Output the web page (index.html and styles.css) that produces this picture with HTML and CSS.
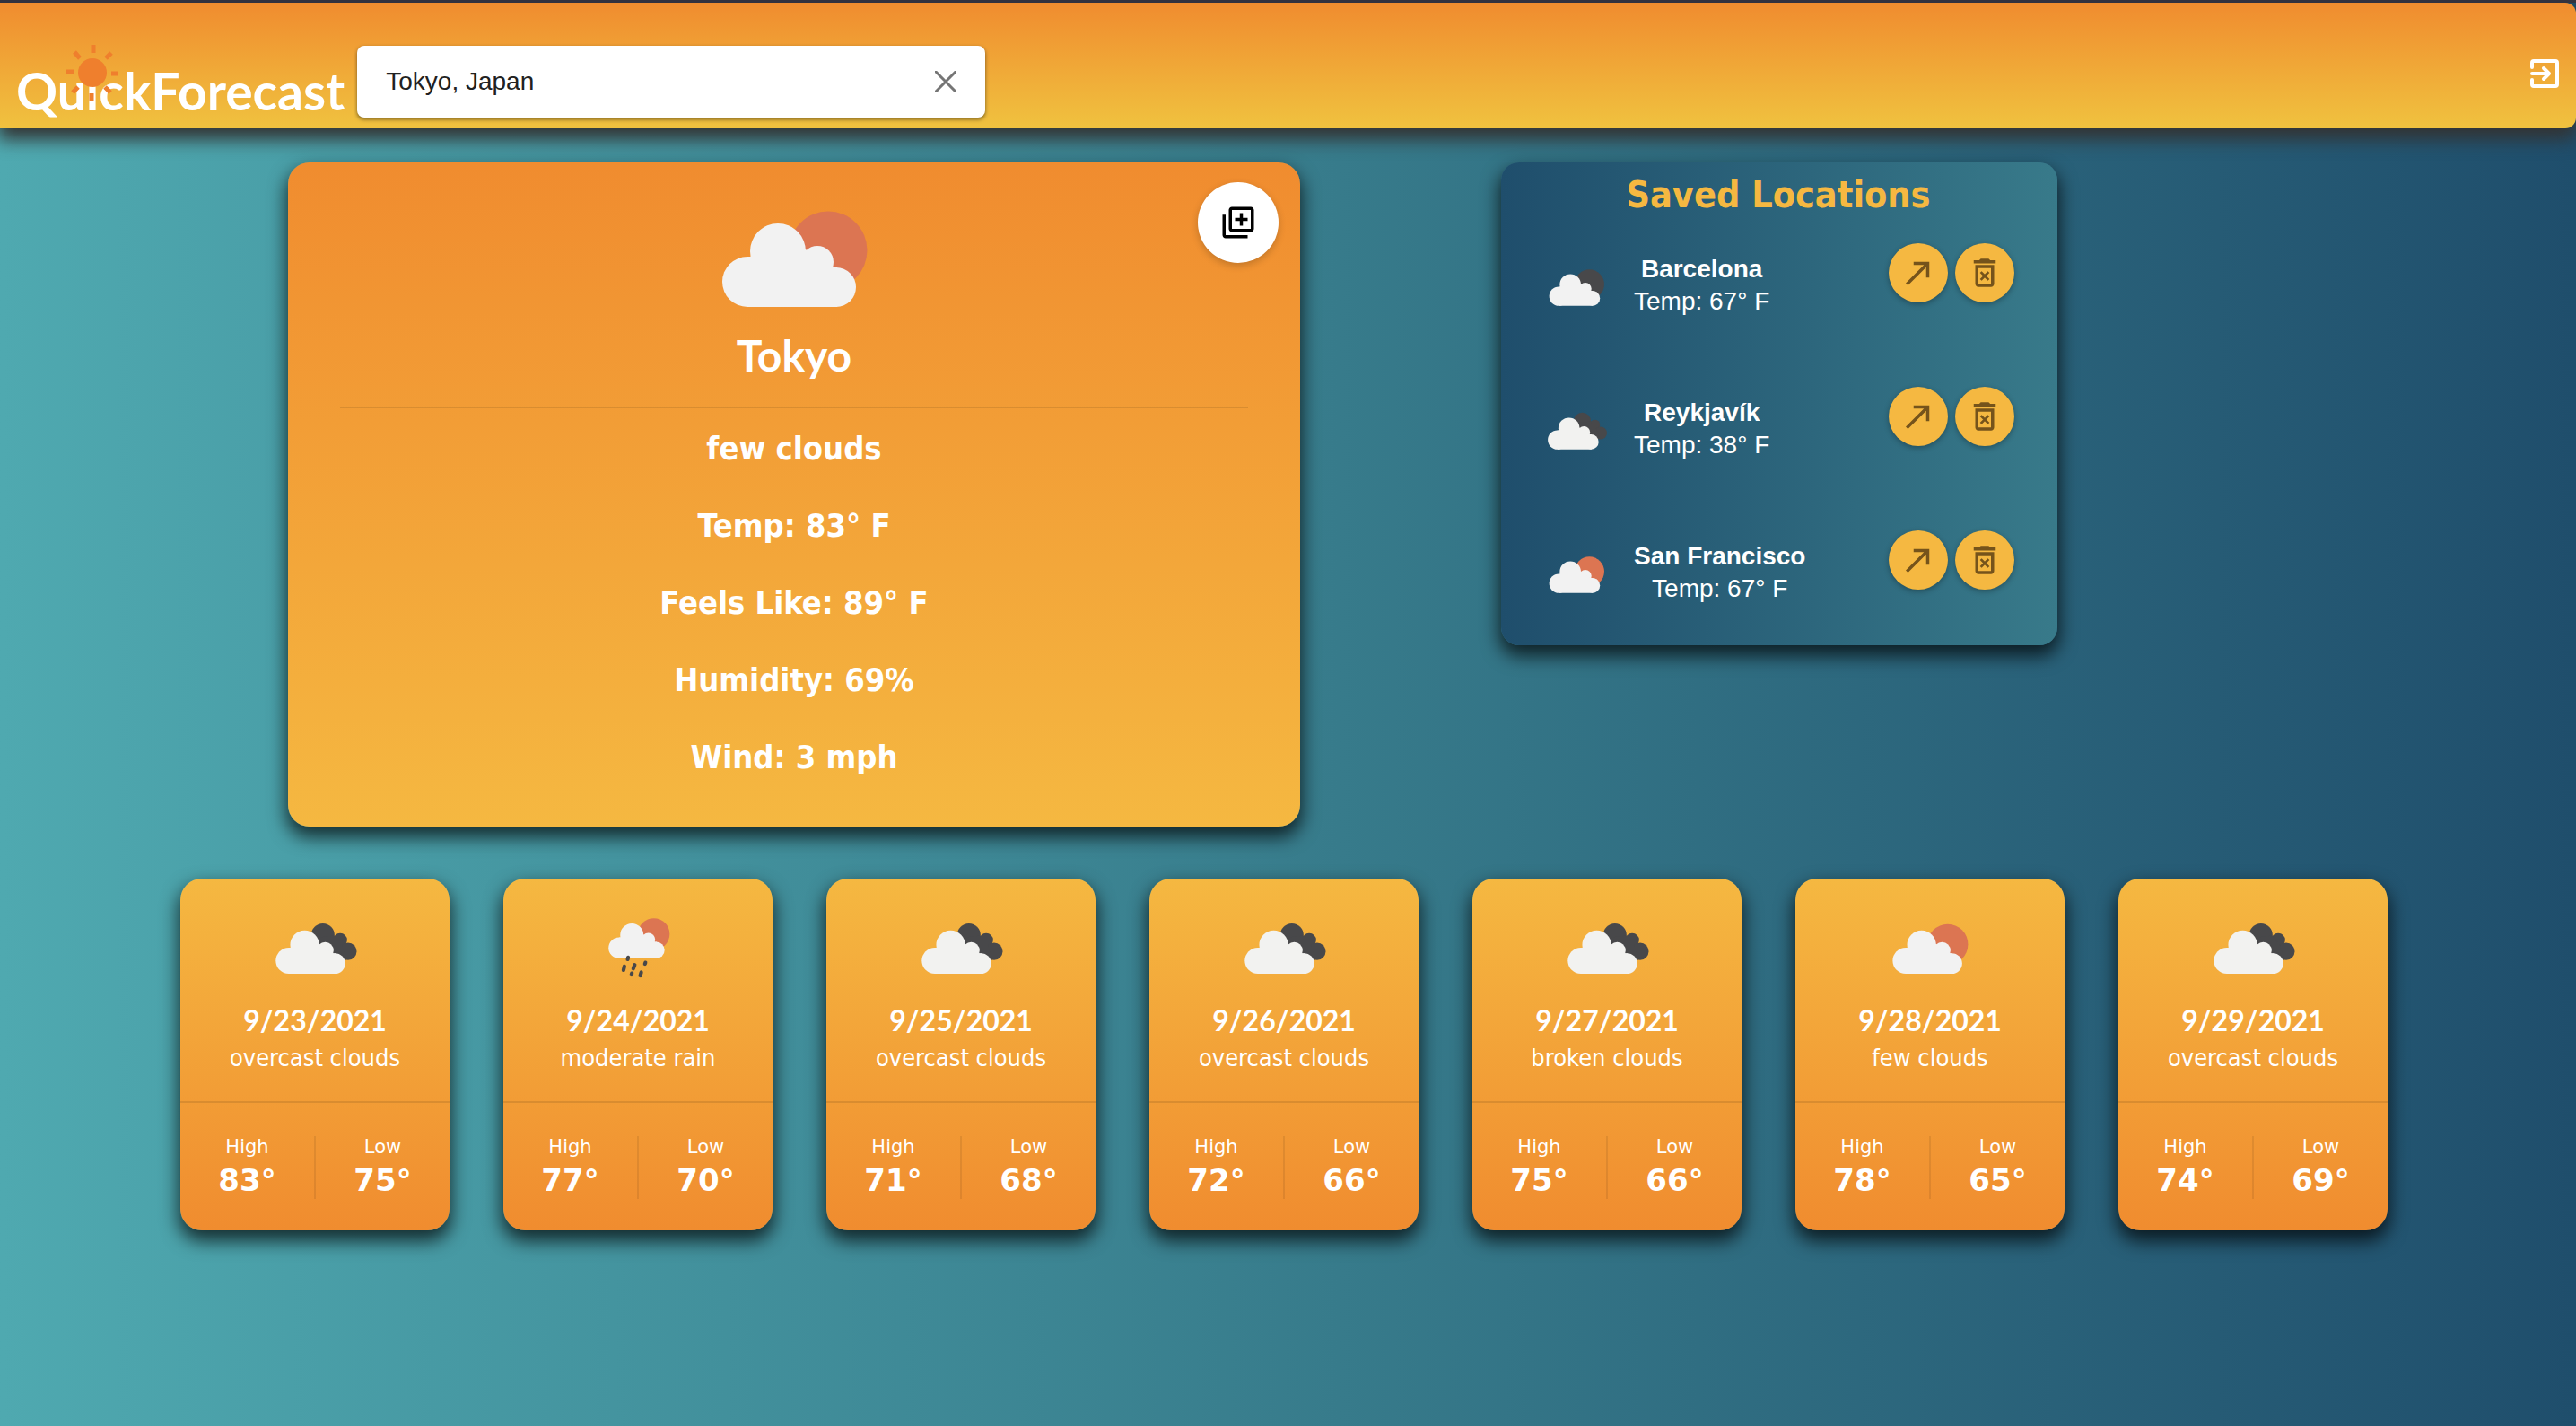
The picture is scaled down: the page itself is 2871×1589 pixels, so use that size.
FILE: index.html
```html
<!DOCTYPE html>
<html lang="en">
<head>
<meta charset="utf-8">
<title>QuickForecast</title>
<meta name="viewport" content="width=device-width, initial-scale=1">
<link rel="stylesheet" href="styles.css">
</head>
<body>
<svg class="sprite" aria-hidden="true">
  <defs>
    <g id="cloud"><circle cx="28" cy="64" r="28"/><circle cx="62" cy="30" r="31"/><circle cx="106" cy="42" r="18"/><circle cx="127" cy="70" r="22"/><path d="M28 92V36H31L62 30L93 28L106 40L124 48H128V92Z"/></g>
    <symbol id="few" viewBox="0 0 200 200"><circle cx="138" cy="89" r="43.500" fill="#dc7552"/><use href="#cloud" x="20" y="60" fill="#f2f2f2"/></symbol>
    <symbol id="few-night" viewBox="0 0 200 200"><circle cx="138" cy="89" r="43.500" fill="#48484a"/><use href="#cloud" x="20" y="60" fill="#f2f2f2"/></symbol>
    <symbol id="broken" viewBox="-3 0 200 200"><g fill="#48484a"><circle cx="114" cy="69" r="25"/><circle cx="151" cy="80" r="15"/><circle cx="168" cy="104" r="18.500"/><path d="M100 75L138 70L155 92L165 122H140Z"/></g><use href="#cloud" x="13" y="60" fill="#f2f2f0"/></symbol>
    <symbol id="rain" viewBox="0 0 200 200"><circle cx="134" cy="67" r="34" fill="#dc7552"/><use href="#cloud" transform="translate(37 45) scale(.806)" fill="#f2f2f2"/><g stroke="#48484a" stroke-width="8" stroke-linecap="round"><path d="M79 117L78 121M71 136L69 144M93 133L90 141M116 128L115 131M87 151L86 154M107 149L105 156"/></g></symbol>
    <symbol id="open" viewBox="0 0 24 24"><path d="M9 5v2h6.590L4 18.590 5.410 20 17 8.410V15h2V5z"/></symbol>
    <symbol id="trash" viewBox="0 0 24 24"><path fill-rule="evenodd" d="M6 19c0 1.100.9 2 2 2h8c1.100 0 2-.9 2-2V7H6v12zM8 9h8v10H8V9zm7.500-5l-1-1h-5l-1 1H5v2h14V4z"/><path d="M9.500 11.500l5 5m0-5l-5 5" fill="none" stroke="currentColor" stroke-width="1.600"/></symbol>
  </defs>
</svg>

<header class="header">
  <a class="logo" href="#">
    QuickForecast
    <svg class="logo-sun" viewBox="0 0 58 62" aria-hidden="true"><circle cx="29" cy="31" r="16"/><g stroke="#ef7f2d" stroke-width="5"><path d="M30 0V9M0 30H8M50 32H58M28 54V62M9 8L15 15M50 9L44 15M7 53L13 47M43 47L49 53"/></g></svg>
  </a>
  <form class="search">
    <input class="search-input" type="text" aria-label="Search location" value="Tokyo, Japan">
    <button class="search-clear" type="button" aria-label="Clear">
      <svg viewBox="0 0 24 24" aria-hidden="true"><path d="M1 1L23 23M23 1L1 23" fill="none" stroke="#757575" stroke-width="3" stroke-linecap="round"/></svg>
    </button>
  </form>
  <button class="logout" type="button" aria-label="Log out">
    <svg viewBox="0 0 32 32" fill="none" stroke="#fff" stroke-width="4" stroke-linejoin="round" stroke-linecap="round" aria-hidden="true"><path d="M2 9V4Q2 2 4 2H28Q30 2 30 4V28Q30 30 28 30H4Q2 30 2 28V23"/><path d="M2 16H21M15 10L21 16L15 22"/></svg>
  </button>
</header>

<main>
  <div class="top">
    <section class="current">
      <button class="save" type="button" aria-label="Save location">
        <svg viewBox="0 0 24 24" aria-hidden="true"><path d="M4 7H2v13c0 1.100.9 2 2 2h14v-2H4V7z"/><path fill-rule="evenodd" d="M20 2H8c-1.100 0-2 .9-2 2v12c0 1.100.9 2 2 2h12c1.100 0 2-.9 2-2V4c0-1.100-.9-2-2-2zm0 14H8V4h12v12zm-7-2h2v-3h3V9h-3V6h-2v3h-3v2h3z"/></svg>
      </button>
      <svg class="current-icon" role="img" aria-label="few clouds"><use href="#few"/></svg>
      <h1 class="city">Tokyo</h1>
      <div class="details">
        <p>few clouds</p>
        <p>Temp: 83° F</p>
        <p>Feels Like: 89° F</p>
        <p>Humidity: 69%</p>
        <p>Wind: 3 mph</p>
      </div>
    </section>

    <aside class="saved">
      <h2 class="saved-title">Saved Locations</h2>
      <ul class="saved-list">
        <li class="place">
          <svg class="place-icon" aria-hidden="true"><use href="#few-night"/></svg>
          <div class="place-text"><strong>Barcelona</strong><span>Temp: 67° F</span></div>
          <div class="place-actions">
            <button type="button" aria-label="Open Barcelona"><svg aria-hidden="true"><use href="#open"/></svg></button>
            <button type="button" aria-label="Delete Barcelona"><svg aria-hidden="true"><use href="#trash"/></svg></button>
          </div>
        </li>
        <li class="place">
          <svg class="place-icon" aria-hidden="true"><use href="#broken"/></svg>
          <div class="place-text"><strong>Reykjavík</strong><span>Temp: 38° F</span></div>
          <div class="place-actions">
            <button type="button" aria-label="Open Reykjavík"><svg aria-hidden="true"><use href="#open"/></svg></button>
            <button type="button" aria-label="Delete Reykjavík"><svg aria-hidden="true"><use href="#trash"/></svg></button>
          </div>
        </li>
        <li class="place">
          <svg class="place-icon" aria-hidden="true"><use href="#few"/></svg>
          <div class="place-text"><strong>San Francisco</strong><span>Temp: 67° F</span></div>
          <div class="place-actions">
            <button type="button" aria-label="Open San Francisco"><svg aria-hidden="true"><use href="#open"/></svg></button>
            <button type="button" aria-label="Delete San Francisco"><svg aria-hidden="true"><use href="#trash"/></svg></button>
          </div>
        </li>
      </ul>
    </aside>
  </div>

  <section class="forecast" aria-label="Forecast">
    <article class="day">
      <div class="day-main"><svg class="day-icon" aria-hidden="true"><use href="#broken"/></svg><h3>9/23/2021</h3><p>overcast clouds</p></div>
      <dl class="range"><div><dt>High</dt><dd>83°</dd></div><div><dt>Low</dt><dd>75°</dd></div></dl>
    </article>
    <article class="day">
      <div class="day-main"><svg class="day-icon" aria-hidden="true"><use href="#rain"/></svg><h3>9/24/2021</h3><p>moderate rain</p></div>
      <dl class="range"><div><dt>High</dt><dd>77°</dd></div><div><dt>Low</dt><dd>70°</dd></div></dl>
    </article>
    <article class="day">
      <div class="day-main"><svg class="day-icon" aria-hidden="true"><use href="#broken"/></svg><h3>9/25/2021</h3><p>overcast clouds</p></div>
      <dl class="range"><div><dt>High</dt><dd>71°</dd></div><div><dt>Low</dt><dd>68°</dd></div></dl>
    </article>
    <article class="day">
      <div class="day-main"><svg class="day-icon" aria-hidden="true"><use href="#broken"/></svg><h3>9/26/2021</h3><p>overcast clouds</p></div>
      <dl class="range"><div><dt>High</dt><dd>72°</dd></div><div><dt>Low</dt><dd>66°</dd></div></dl>
    </article>
    <article class="day">
      <div class="day-main"><svg class="day-icon" aria-hidden="true"><use href="#broken"/></svg><h3>9/27/2021</h3><p>broken clouds</p></div>
      <dl class="range"><div><dt>High</dt><dd>75°</dd></div><div><dt>Low</dt><dd>66°</dd></div></dl>
    </article>
    <article class="day">
      <div class="day-main"><svg class="day-icon" aria-hidden="true"><use href="#few"/></svg><h3>9/28/2021</h3><p>few clouds</p></div>
      <dl class="range"><div><dt>High</dt><dd>78°</dd></div><div><dt>Low</dt><dd>65°</dd></div></dl>
    </article>
    <article class="day">
      <div class="day-main"><svg class="day-icon" aria-hidden="true"><use href="#broken"/></svg><h3>9/29/2021</h3><p>overcast clouds</p></div>
      <dl class="range"><div><dt>High</dt><dd>74°</dd></div><div><dt>Low</dt><dd>69°</dd></div></dl>
    </article>
  </section>
</main>
</body>
</html>
```
FILE: styles.css
```css
*, *::before, *::after { box-sizing: border-box; }

body {
  margin: 0;
  min-height: 100vh;
  border-top: 3px solid #33323f;
  background: linear-gradient(90deg, #4fa9b0 0%, #377b8b 52%, #1f4e6c 100%);
  color: #fff;
  font-family: "DejaVu Sans Condensed", "Noto Sans", sans-serif;
}

h1, h2, h3, p, ul, dl, dd { margin: 0; padding: 0; }
button { border: 0; padding: 0; cursor: pointer; }
.sprite { position: absolute; width: 0; height: 0; }

.header {
  display: flex;
  align-items: center;
  min-height: 140px;
  padding: 36px 19px 0 18px;
  border-radius: 0 12px 12px 0;
  background: linear-gradient(#f08c2f, #f0c23f);
  box-shadow: 0 10px 20px 2px #333;
}

.logo {
  position: relative;
  margin: 20px 14px 0 0;
  color: #fff;
  font: 700 57px/66px Lato, sans-serif;
  text-decoration: none;
}
.logo-sun { position: absolute; left: 56px; top: -18px; width: 58px; height: 62px; fill: #ef7f2d; }

.search {
  display: flex;
  align-items: center;
  flex: 0 1 700px;
  height: 80px;
  padding: 0 32px;
  border-radius: 8px;
  background: #fff;
  box-shadow: 0 2px 4px rgba(0, 0, 0, .5);
}
.search-input {
  flex: 1;
  min-width: 0;
  border: 0;
  padding: 0;
  outline: 0;
  background: none;
  color: #212121;
  font: 28px/40px "Liberation Sans", Arial, sans-serif;
}
.search-clear { display: flex; background: none; }
.search-clear svg { width: 24px; height: 24px; }

.logout { display: flex; margin: 0 0 18px auto; background: none; }
.logout svg { width: 32px; height: 32px; }

.top {
  display: grid;
  grid-template-columns: 1128fr 620fr;
  gap: 224px;
  align-items: start;
  padding: 38px 578px 58px 321px;
}

.current, .saved, .day { box-shadow: 0 10px 20px 2px rgba(0, 0, 0, .7); }

.current {
  position: relative;
  padding: 9px 58px 34px;
  border-radius: 24px;
  background: linear-gradient(#f08c2f, #f5b841);
  text-align: center;
}
.save {
  position: absolute;
  top: 22px;
  right: 24px;
  display: grid;
  place-items: center;
  width: 90px;
  height: 90px;
  border-radius: 50%;
  background: #fff;
  box-shadow: 0 3px 8px rgba(0, 0, 0, .2);
}
.save svg { width: 42px; height: 42px; }
.current-icon { display: block; width: 200px; height: 200px; margin: 0 auto -18px; }
.city {
  padding-bottom: 33px;
  border-bottom: 2px solid rgba(0, 0, 0, .1);
  font: 700 48px/48px Lato, sans-serif;
}
.details { padding-top: 2px; font-size: 36px; font-weight: 700; line-height: 86px; }

.saved {
  padding: 12px 48px 8px 46px;
  border-radius: 20px;
  background: linear-gradient(90deg, #1f4e6c, #387a8a);
}
.saved-title { color: #f5b841; font-size: 41px; line-height: 48px; text-align: center; }
.saved-list {
  display: grid;
  gap: 40px;
  margin-top: 30px;
  list-style: none;
}
.place { display: flex; align-items: flex-start; height: 120px; }
.place-icon { width: 76px; height: 100px; }
.place-text {
  margin-left: 26px;
  padding-top: 11px;
  font: 28px/36px "Liberation Sans", Arial, sans-serif;
  text-align: center;
}
.place-text strong, .place-text span { display: block; }
.place-actions { display: flex; gap: 8px; margin-left: auto; }
.place-actions button {
  display: grid;
  place-items: center;
  width: 66px;
  height: 66px;
  border-radius: 50%;
  background: #f5b841;
  color: #75531b;
  box-shadow: 0 2px 6px rgba(0, 0, 0, .3);
}
.place-actions svg { width: 42px; height: 42px; fill: currentColor; }

.forecast {
  display: grid;
  grid-template-columns: repeat(7, 1fr);
  gap: 60px;
  padding: 0 210px 60px 201px;
}
.day {
  border-radius: 24px;
  background: linear-gradient(#f5b841, #f08c2f);
  text-align: center;
}
.day-main {
  padding: 27px 8px 30px;
  border-bottom: 2px solid rgba(0, 0, 0, .1);
}
.day-icon { display: block; width: 104px; height: 104px; margin: 0 auto 4px; }
.day h3 { font: 700 32px/46px Lato, sans-serif; }
.day p { font-size: 27px; line-height: 37px; }
.range {
  display: flex;
  padding: 37px 0 35px;
  font-family: "DejaVu Sans", sans-serif;
}
.range div { flex: 1; height: 70px; }
.range div:first-child { border-right: 2px solid rgba(0, 0, 0, .08); }
.range dt { font-size: 21px; line-height: 24px; }
.range dd { font-size: 34px; font-weight: 700; line-height: 50px; }
```
